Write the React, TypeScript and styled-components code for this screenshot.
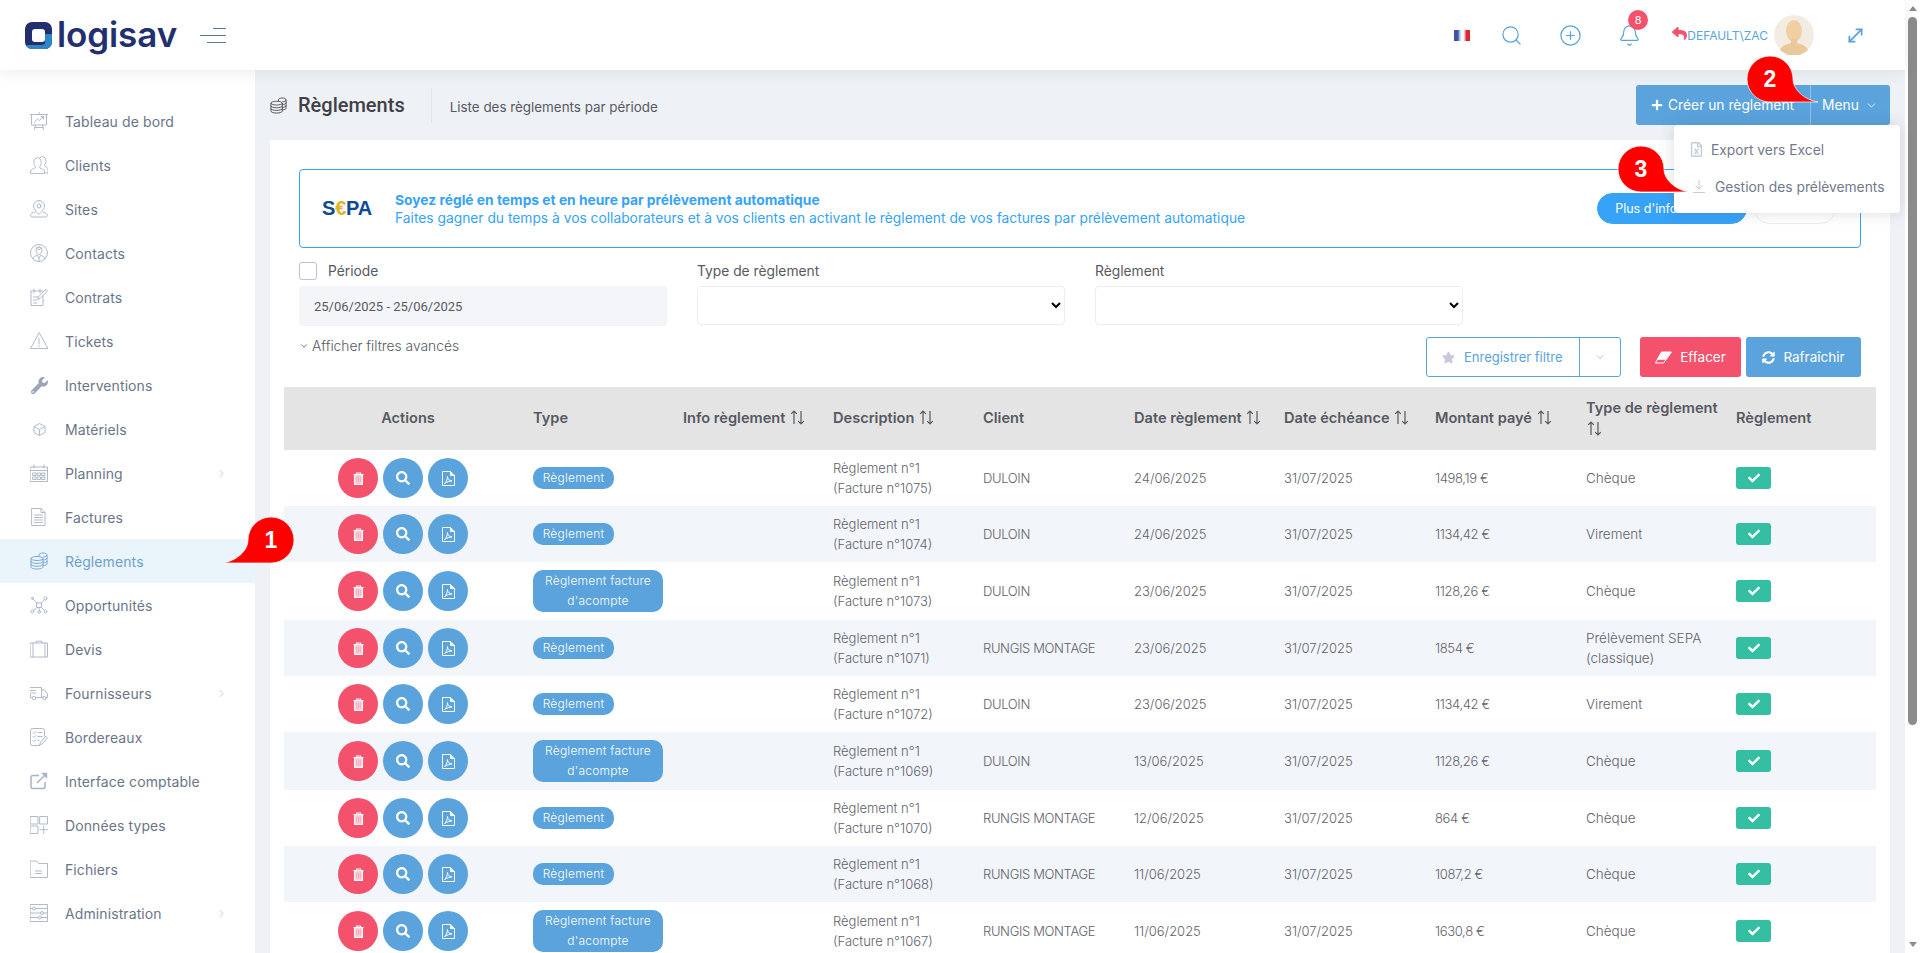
import React from "react"
import styled, { createGlobalStyle } from "styled-components"
import { Bell, ChevronDown, ChevronRight, CirclePlus, MoveDiagonal, Search } from "lucide-react"
import { FaCheck, FaPlus, FaRegFileExcel, FaReply, FaSearch, FaStar, FaSyncAlt, FaWrench } from "react-icons/fa"

const UI_FONT = `Inter, "Noto Sans", sans-serif`

const GlobalStyle = createGlobalStyle`
  html, body {
    margin: 0;
    padding: 0;
    height: 100%;
    overflow: hidden;
    background: #eef1f5;
    font-family: ${UI_FONT};
  }
  * { box-sizing: border-box; }
`

const Screen = styled.div`
  position: relative;
  display: flex;
  width: 100%;
  height: 100vh;
  overflow: hidden;
`

const Page = styled.div`
  flex: 1;
  min-width: 0;
  display: flex;
  flex-direction: column;
`

const Topbar = styled.header`
  position: relative;
  z-index: 3;
  flex: 0 0 70px;
  display: flex;
  align-items: center;
  background: #fff;
  padding: 0 39px 0 25px;
  box-shadow: 0 2px 14px rgba(69, 65, 78, 0.1);
`

const Logo = styled.div`
  display: flex;
  align-items: center;
  gap: 5px;
`

const LogoText = styled.span`
  font-size: 35px;
  font-weight: 600;
  letter-spacing: -0.1px;
  line-height: 1;
  color: #242f6f;
  margin-top: -2px;
`

const Burger = styled.button`
  display: flex;
  flex-direction: column;
  align-items: flex-end;
  gap: 6px;
  width: 26px;
  margin-left: 23px;
  padding: 0;
  border: 0;
  background: none;
`

const BurgerLine = styled.span<{ $w: number }>`
  display: block;
  height: 1px;
  width: ${(p) => p.$w}px;
  background: #5d7c94;
`

const TopRight = styled.div`
  margin-left: auto;
  display: flex;
  align-items: center;
  color: #5aa3dc;
`

const TopItem = styled.div<{ $gap: number }>`
  position: relative;
  display: flex;
  align-items: center;
  margin-left: ${(p) => p.$gap}px;
`

const Flag = styled.span`
  display: block;
  width: 16px;
  height: 11px;
  background: linear-gradient(90deg, #3d55a5 0 25%, #9fb0da 33%, #f4f5fa 45% 60%, #f2a8a8 68%, #e0262e 78% 100%);
`

const BellBadge = styled.span`
  position: absolute;
  top: -14px;
  left: 10px;
  width: 20px;
  height: 20px;
  border-radius: 50%;
  background: #f4516c;
  color: #fff;
  font-size: 11px;
  display: flex;
  align-items: center;
  justify-content: center;
`

const BackIcon = styled(FaReply)`
  color: #f4516c;
  font-size: 15px;
  margin-top: -4px;
`

const UserName = styled.span`
  font-size: 12px;
  color: #5aa3dc;
`

const Body = styled.div`
  flex: 1;
  min-height: 0;
  display: flex;
`

const Sidebar = styled.nav`
  flex: 0 0 255px;
  background: #fff;
  padding-top: 29px;
`

const NavItem = styled.a<{ $active?: boolean }>`
  display: flex;
  align-items: center;
  height: 44px;
  padding: 0 27px 0 30px;
  gap: 17px;
  font-size: 14px;
  color: ${(p) => (p.$active ? "#6f9fd0" : "#6b7589")};
  background: ${(p) => (p.$active ? "#e9f4fb" : "transparent")};
  letter-spacing: 0.1px;
`

const NavIconBox = styled.span<{ $active?: boolean }>`
  flex: 0 0 18px;
  display: flex;
  align-items: center;
  justify-content: center;
  color: ${(p) => (p.$active ? "#6f9fd0" : "#a8b3c5")};
`

const NavArrow = styled(ChevronRight)`
  margin-left: auto;
  color: #a8b3c5;
`

const Content = styled.main`
  flex: 1;
  min-width: 0;
  padding: 0 15px;
`

const SubHeader = styled.div`
  height: 70px;
  display: flex;
  align-items: center;
`

const PageTitle = styled.h1`
  display: flex;
  align-items: center;
  gap: 11px;
  margin: 0;
  padding-right: 26px;
  height: 35px;
  border-right: 1px solid #e2e5ec;
  font-family: Roboto, sans-serif;
  font-size: 20px;
  font-weight: 500;
  color: #3f4047;
`

const PageHint = styled.span`
  margin-left: 18px;
  font-size: 13.4px;
  color: #575962;
  padding-top: 3px;
`

const ActionGroup = styled.div`
  position: relative;
  margin-left: auto;
  display: flex;
  align-items: center;
  height: 40px;
  width: 254px;
  background: #5aa3dc;
  border-radius: 3px;
  color: #fff;
  font-size: 13.8px;
`

const CreateAction = styled.span`
  flex: 0 0 175px;
  display: flex;
  align-items: center;
  gap: 5px;
  height: 100%;
  padding-left: 15px;
  border-right: 1px solid #8fc0e6;
`

const MenuAction = styled.span`
  display: flex;
  align-items: center;
  gap: 6px;
  padding-left: 11px;
`

const Dropdown = styled.div`
  position: absolute;
  z-index: 2;
  top: 40px;
  right: -10px;
  width: 226px;
  height: 88px;
  padding-top: 6px;
  background: #fff;
  border-radius: 4px;
  box-shadow: 0 0 15px rgba(69, 65, 78, 0.18);
`

const DropdownItem = styled.div<{ $indent: number; $gap: number }>`
  display: flex;
  align-items: center;
  height: 37px;
  gap: ${(p) => p.$gap}px;
  padding-left: ${(p) => p.$indent}px;
  font-size: 13.8px;
  color: #74788d;
  svg {
    color: #c4cdd8;
  }
`

const Card = styled.section`
  background: #fff;
  padding: 29px 29px 0;
  height: 813px;
`

const Banner = styled.div`
  display: flex;
  align-items: center;
  height: 79px;
  border: 1px solid #36a3f7;
  border-radius: 4px;
  padding: 0 22px;
  color: #36a3f7;
`

const SepaLogo = styled.span`
  flex: 0 0 73px;
  font-family: "Liberation Sans", sans-serif;
  font-size: 20px;
  font-weight: 700;
  letter-spacing: -0.2px;
  color: #0c4a96;
`

const SepaEuro = styled.span`
  color: #e2b323;
`

const BannerText = styled.div`
  flex: 1;
  font-size: 13.8px;
  line-height: 18px;
`

const BannerTitle = styled.div`
  font-weight: 700;
`

const BannerButton = styled.span<{ $filled?: boolean }>`
  display: flex;
  align-items: center;
  justify-content: center;
  flex: 0 0 ${(p) => (p.$filled ? 150 : 82)}px;
  margin-right: ${(p) => (p.$filled ? 7 : 2)}px;
  height: 31px;
  border-radius: 16px;
  font-size: 12.5px;
  color: #fff;
  background: ${(p) => (p.$filled ? "#36a3f7" : "#fff")};
  border: 1px solid ${(p) => (p.$filled ? "#36a3f7" : "#ebedf2")};
`

const Filters = styled.div`
  display: grid;
  grid-template-columns: repeat(3, 368px);
  column-gap: 30px;
  margin-top: 14px;
`

const FieldLabel = styled.label`
  display: flex;
  align-items: center;
  gap: 11px;
  height: 18px;
  margin-bottom: 6px;
  font-size: 13.8px;
  color: #575962;
`

const CheckBox = styled.span`
  display: block;
  width: 18px;
  height: 18px;
  border: 1px solid #bdc3d4;
  border-radius: 3px;
`

const DateInput = styled.div`
  display: flex;
  align-items: center;
  height: 40px;
  padding-left: 15px;
  background: #f4f5f8;
  border-radius: 3px;
  font-family: Roboto, sans-serif;
  font-size: 13px;
  color: #575962;
`

const Select = styled.select`
  display: block;
  width: 100%;
  height: 39px;
  margin-top: 1px;
  background: #fff;
  border: 1px solid #ebedf2;
  border-radius: 4px;
`

const ToolRow = styled.div`
  display: flex;
  justify-content: space-between;
  margin: 11px 0 10px;
`

const AdvancedToggle = styled.span`
  display: flex;
  align-items: center;
  gap: 3px;
  height: 18px;
  font-size: 13.8px;
  font-weight: 300;
  color: #575962;
`

const ToolButtons = styled.div`
  display: flex;
`

const SaveFilter = styled.div`
  display: flex;
  width: 195px;
  height: 40px;
  margin-right: 19px;
  border: 1px solid #5aa3dc;
  border-radius: 3px;
  font-size: 13px;
  color: #5aa3dc;
`

const SaveMain = styled.span`
  flex: 1;
  display: flex;
  align-items: center;
  gap: 9px;
  padding-left: 15px;
  border-right: 1px solid #5aa3dc;
  svg {
    color: #c9c8dc;
  }
`

const SaveToggle = styled.span`
  flex: 0 0 40px;
  display: flex;
  align-items: center;
  justify-content: center;
`

const ToolButton = styled.span<{ $danger?: boolean; $w: number }>`
  display: flex;
  align-items: center;
  justify-content: center;
  gap: 8px;
  width: ${(p) => p.$w}px;
  height: 40px;
  margin-left: ${(p) => (p.$danger ? 0 : 5)}px;
  border-radius: 3px;
  font-size: 13.5px;
  color: #fff;
  background: ${(p) => (p.$danger ? "#f4516c" : "#5aa3dc")};
`

const Table = styled.table`
  width: 1592px;
  margin-left: -15px;
  border-collapse: collapse;
  table-layout: fixed;
`

const HeadRow = styled.tr`
  height: 63px;
  background: #e4e4e4;
`

const Th = styled.th<{ $center?: boolean; $w: number }>`
  width: ${(p) => p.$w}px;
  padding: 0 0 0 15px;
  font-size: 14.6px;
  font-weight: 600;
  line-height: 21px;
  text-align: ${(p) => (p.$center ? "center" : "left")};
  color: #575962;
  ${(p) => p.$center && "padding-left: 29px; padding-right: 15px;"}
`

const SortIcon = styled.svg`
  width: 16px;
  height: 15px;
  vertical-align: -2px;
  margin-left: 1px;
`

const Row = styled.tr<{ $striped: boolean }>`
  background: ${(p) => (p.$striped ? "#f2f5fa" : "#fff")};
`

const Td = styled.td`
  padding: 8px 15px;
  font-size: 13px;
  font-weight: 300;
  line-height: 20px;
  color: #5f626c;
`

const TightTd = styled(Td)`
  letter-spacing: -0.35px;
`

const ModeTd = styled(Td)`
  font-size: 13.5px;
`

const RoundButtons = styled.div`
  display: flex;
  gap: 5px;
  padding-left: 39px;
`

const RoundButton = styled.span<{ $danger?: boolean }>`
  display: flex;
  align-items: center;
  justify-content: center;
  width: 40px;
  height: 40px;
  border-radius: 50%;
  color: #fff;
  background: ${(p) => (p.$danger ? "#f4516c" : "#5aa3dc")};
`

const TypeBadge = styled.span<{ $wide: boolean }>`
  display: block;
  width: ${(p) => (p.$wide ? 130 : 81)}px;
  padding: 1px 0;
  border-radius: 10px;
  background: #5aa3dc;
  color: #fff;
  font-size: 12px;
  letter-spacing: 0.25px;
  line-height: 20px;
  text-align: center;
`

const CheckBadge = styled.span`
  display: flex;
  align-items: center;
  justify-content: center;
  width: 35px;
  height: 22px;
  border-radius: 3px;
  background: #34bfa3;
  color: #fff;
`

const ScrollTrack = styled.aside`
  flex: 0 0 15px;
  display: flex;
  flex-direction: column;
  align-items: center;
  background: #fff;
`

const ScrollArrow = styled.span<{ $up?: boolean }>`
  flex: 0 0 17px;
  display: flex;
  align-items: center;
  justify-content: center;
  &::before {
    content: "";
    border-left: 4.5px solid transparent;
    border-right: 4.5px solid transparent;
    ${(p) => (p.$up ? "border-bottom: 5px solid #8c8c8c;" : "border-top: 5px solid #8c8c8c;")}
  }
`

const ScrollThumb = styled.span`
  flex: 0 0 708px;
  width: 9px;
  border-radius: 5px;
  background: #8c8c8c;
`

const ScrollRest = styled.span`
  flex: 1;
`

const Callout = styled.div<{ $x: number; $y: number; $flip?: boolean }>`
  position: absolute;
  z-index: 5;
  left: ${(p) => p.$x}px;
  top: ${(p) => p.$y}px;
  width: 71px;
  height: 46px;
  svg {
    display: block;
    overflow: visible;
    ${(p) => p.$flip && "transform: scaleX(-1);"}
  }
`

const CalloutDigit = styled.span<{ $flip?: boolean }>`
  position: absolute;
  top: 0;
  ${(p) => (p.$flip ? "right: 0;" : "left: 0;")}
  width: 46px;
  height: 46px;
  display: flex;
  align-items: center;
  justify-content: center;
  font-family: "Liberation Sans", sans-serif;
  font-size: 23px;
  font-weight: 700;
  color: #fff;
`

const Ico = ({ children }: { children: React.ReactNode }) => (
  <svg width="18" height="18" viewBox="0 0 18 18" fill="none" stroke="currentColor" strokeWidth="0.9" strokeLinecap="round" strokeLinejoin="round">
    {children}
  </svg>
)

const CoinsIcon = ({ size = 18 }: { size?: number }) => (
  <svg width={size} height={size} viewBox="0 0 18 18" fill="none" stroke="currentColor" strokeWidth="0.9">
    <ellipse cx="7" cy="6.5" rx="6" ry="2" />
    <path d="M1 6.5V15c0 1.1 2.7 2 6 2s6-.9 6-2V6.5M1 9.4c0 1.1 2.7 2 6 2s6-.9 6-2M1 12.2c0 1.1 2.7 2 6 2s6-.9 6-2" />
    <path d="M9 4.4V3c0-1.1 1.8-2 4-2s4 .9 4 2v9c0 .8-1.7 1.6-4 1.7M13 5c2.2 0 4-.9 4-2M13 8c2.2 0 4-.9 4-2M13 11c2.2 0 4-.9 4-2" />
  </svg>
)

const TrashIcon = () => (
  <svg width="11" height="13" viewBox="0 0 11 13" fill="none" stroke="#fff">
    <path d="M.5 2.5h10M3.5 2.5V1h4v1.5" strokeWidth="1.1" />
    <path d="M1.5 2.5h8V12a.5.5 0 0 1-.5.5H2a.5.5 0 0 1-.5-.5z" strokeWidth="1.1" fill="#fbd3d9" />
    <path d="M3.7 4.5v6M5.5 4.5v6M7.3 4.5v6" stroke="#f4a0b0" strokeWidth="0.8" />
  </svg>
)

const PdfIcon = () => (
  <svg width="13" height="15" viewBox="0 0 13 15" fill="none" stroke="#fff" strokeWidth="1">
    <path d="M.5.5h8l4 4v10H.5z" />
    <path d="M8.5.5v4h4" fill="#fff" />
    <path d="M2.5 12.5c1.5-1 3-4 3-7 0 2.5 1.5 4 4.5 4.5-2.5 0-5 1-7.500 2.500z" />
  </svg>
)

const EraserIcon = () => (
  <svg width="17" height="13" viewBox="0 0 17 13" fill="none" stroke="#fff" strokeWidth="1">
    <path d="M6.500 1h10l-5 7H2.500z" fill="#fff" />
    <path d="M2.500 8h9l-3 4h-8z" />
  </svg>
)

type NavEntry = { label: string; icon: React.ReactNode; arrow?: boolean; active?: boolean }

const navEntries: NavEntry[] = [
  {
    label: "Tableau de bord",
    icon: (
      <Ico>
        <path d="M.5 2.5h17M1.5 2.5V13h15V2.500M4 10.500L7.500 7l2 1.500 4-4M11 4.500h2.500V7M5.500 13l-1 4.500M12.500 13l1 4.500M4.800 15.500h8.400M9 .5v2" />
      </Ico>
    ),
  },
  {
    label: "Clients",
    icon: (
      <Ico>
        <path d="M.5 17v-2c0-1.500 3.500-2.200 4.500-3 .6-.6.3-1.400-.2-2.100-.7-.9-1-2.100-1-3.400 0-3 1.600-4.700 3.700-4.700s3.700 1.700 3.700 4.700c0 1.300-.3 2.500-1 3.400-.5.7-.8 1.500-.2 2.100 1 .8 4.500 1.500 4.500 3v2z" />
        <path d="M10.300 1.600c.6-.6 1.300-1 2.200-1 2 0 3.500 1.700 3.500 4.500 0 1.300-.3 2.400-.9 3.300-.5.7-.7 1.400-.2 2 .8.7 3.100 1.200 3.100 2.600V17h-3" />
      </Ico>
    ),
  },
  {
    label: "Sites",
    icon: (
      <Ico>
        <path d="M9 .5A5.500 5.500 0 0 0 3.500 6C3.500 9.500 9 14.500 9 14.500S14.500 9.500 14.500 6A5.500 5.500 0 0 0 9 .5z" />
        <circle cx="9" cy="6" r="2" />
        <path d="M5 12c-2.500.6-4.500 2-4.500 3.300 0 1 .8 1.700 2 1.700h13c1.200 0 2-.7 2-1.700 0-1.300-2-2.700-4.500-3.300" />
      </Ico>
    ),
  },
  {
    label: "Contacts",
    icon: (
      <Ico>
        <circle cx="9" cy="9" r="8.5" />
        <path d="M9 3C7 3 6 4.500 6 6.300s1.500 4.200 3 4.200 3-2.400 3-4.200S11 3 9 3zM2.800 14.500c.4-2 3.200-2.500 4.200-3.500l2 3 2-3c1 1 3.800 1.500 4.200 3.500M9 14v3.500M6 3.500L9 6l3-2.500" />
      </Ico>
    ),
  },
  {
    label: "Contrats",
    icon: (
      <Ico>
        <path d="M13 8v9.500H1V3h12M4 1v4M10 1v4M3.500 9h5M3.500 12h3M3.500 15h3" />
        <path d="M16 1.500L17.500 3 10 10.500l-2.500 1 1-2.500z" />
      </Ico>
    ),
  },
  {
    label: "Tickets",
    icon: (
      <Ico>
        <path d="M9 1L.5 16.500h17zM9 6.500V12M9 13.500v1" />
      </Ico>
    ),
  },
  { label: "Interventions", icon: <FaWrench size={17} color="#9aa5b5" /> },
  {
    label: "Matériels",
    icon: (
      <svg width="13" height="13" viewBox="0 0 13 13" fill="none" stroke="currentColor" strokeWidth="0.9" strokeLinejoin="round">
        <path d="M6.500.5l5.500 3v6l-5.500 3-5.500-3v-6zM1 3.500l5.500 3 5.500-3M6.500 6.500v6" />
      </svg>
    ),
  },
  {
    label: "Planning",
    arrow: true,
    icon: (
      <Ico>
        <path d="M.5 3h17v14.500H.5zM.5 6.500h17M4 1v3M14 1v3M3 9h3v2.500H3zM7.500 9h3v2.500h-3zM12 9h3v2.500h-3zM3 13h3v2.500H3zM7.500 13h3v2.500h-3zM12 13h3v2.500h-3z" />
      </Ico>
    ),
  },
  {
    label: "Factures",
    icon: (
      <Ico>
        <path d="M2 .5h9l4 4v13H2zM11 .5v4h4M4.500 7h8M4.500 9.500h8M4.500 12h8M4.500 14.500h8" />
      </Ico>
    ),
  },
  { label: "Règlements", active: true, icon: <CoinsIcon /> },
  {
    label: "Opportunités",
    icon: (
      <Ico>
        <path d="M7 7h4.500v4.500H7zM7 7L3 3M11.500 7l3-3.500M7 11.500l-3.500 3M11.500 11.500l3 3M9.200 11.500v3" />
        <circle cx="2.3" cy="2.3" r="1" />
        <circle cx="15.3" cy="2.5" r="1.5" />
        <circle cx="2.3" cy="15.5" r="1.5" />
        <circle cx="15.5" cy="15.5" r="1.3" />
        <circle cx="9.2" cy="16" r="1.3" />
      </Ico>
    ),
  },
  {
    label: "Devis",
    icon: (
      <Ico>
        <path d="M.5 3h17v14H.5zM3 3v14M15 3v14M6 3V1.200h6V3" />
      </Ico>
    ),
  },
  {
    label: "Fournisseurs",
    arrow: true,
    icon: (
      <Ico>
        <path d="M.5 3.500h11v10h-5M2 13.500H.5v-3M.5 6.500h5M.5 9h5M11.500 6h3l3 4v3.500H16M11.500 13.500H13" />
        <circle cx="4" cy="14" r="1.7" />
        <circle cx="14.3" cy="14" r="1.7" />
      </Ico>
    ),
  },
  {
    label: "Bordereaux",
    icon: (
      <Ico>
        <path d="M14.500 8V2.500a2 2 0 0 0-2-2h-10a2 2 0 0 0-2 2v13a2 2 0 0 0 2 2h7" />
        <path d="M3 4.500l1 1 2-2M8 4.500h4M3 8.500l1 1 2-2M8 8.500h4M3 12.500l1 1 2-2M8 12.500h1" />
        <path d="M16 8.500l1.500 1.500-5.500 6-2.500 1 1-2.500z" />
      </Ico>
    ),
  },
  {
    label: "Interface comptable",
    icon: (
      <svg width="18" height="18" viewBox="0 0 18 18" fill="none" stroke="currentColor" strokeWidth="1.5" strokeLinejoin="round">
        <path d="M15 10v4.500a2 2 0 0 1-2 2H3a2 2 0 0 1-2-2v-9a2 2 0 0 1 2-2h6M7 11l8.500-8.500" />
        <path d="M11 .8h6.200V7z" fill="currentColor" stroke="none" />
      </svg>
    ),
  },
  {
    label: "Données types",
    icon: (
      <Ico>
        <path d="M.5.5H8V8H.5zM10 .5h7.500V8H10zM.5 10H8v7.500H.5zM13.700 10v7.500M10 13.700h7.500" />
      </Ico>
    ),
  },
  {
    label: "Fichiers",
    icon: (
      <Ico>
        <path d="M.5 1h6l2 2.500h9v14H.5zM5.500 11h6M5.500 13.500h6" />
      </Ico>
    ),
  },
  {
    label: "Administration",
    arrow: true,
    icon: (
      <Ico>
        <path d="M.5.5h17v17H.5zM.5 4.500h2M5.500 4.500h12M.5 9h10M13.500 9h4M.5 13.500h8M11.500 13.500h6" />
        <circle cx="4" cy="4.5" r="1.5" />
        <circle cx="12" cy="9" r="1.5" />
        <circle cx="10" cy="13.5" r="1.5" />
      </Ico>
    ),
  },
]

type Reglement = {
  wide: boolean
  facture: number
  client: string
  date: string
  montant: string
  mode: string
}

const reglements: Reglement[] = [
  { wide: false, facture: 1075, client: "DULOIN", date: "24/06/2025", montant: "1498,19 €", mode: "Chèque" },
  { wide: false, facture: 1074, client: "DULOIN", date: "24/06/2025", montant: "1134,42 €", mode: "Virement" },
  { wide: true, facture: 1073, client: "DULOIN", date: "23/06/2025", montant: "1128,26 €", mode: "Chèque" },
  { wide: false, facture: 1071, client: "RUNGIS MONTAGE", date: "23/06/2025", montant: "1854 €", mode: "Prélèvement SEPA (classique)" },
  { wide: false, facture: 1072, client: "DULOIN", date: "23/06/2025", montant: "1134,42 €", mode: "Virement" },
  { wide: true, facture: 1069, client: "DULOIN", date: "13/06/2025", montant: "1128,26 €", mode: "Chèque" },
  { wide: false, facture: 1070, client: "RUNGIS MONTAGE", date: "12/06/2025", montant: "864 €", mode: "Chèque" },
  { wide: false, facture: 1068, client: "RUNGIS MONTAGE", date: "11/06/2025", montant: "1087,2 €", mode: "Chèque" },
  { wide: true, facture: 1067, client: "RUNGIS MONTAGE", date: "11/06/2025", montant: "1630,8 €", mode: "Chèque" },
]

const Sort = () => (
  <SortIcon viewBox="0 0 16 15" fill="none" stroke="currentColor" strokeWidth="1.2">
    <path d="M4 14V1M1.200 3.800L4 1l2.800 2.800M11 1v13M8.200 11.200L11 14l2.800-2.800" />
  </SortIcon>
)

const Marker = ({ n, x, y, flip }: { n: number; x: number; y: number; flip?: boolean }) => (
  <Callout $x={x} $y={y} $flip={flip}>
    <svg width="71" height="46" viewBox="0 0 71 46">
      <path d="M23 0A23 23 0 0 0 23 46H71C58 44 46 34 46 23A23 23 0 0 0 23 0Z" fill="#ff0000" stroke="#fff" strokeWidth="0.7" />
    </svg>
    <CalloutDigit $flip={flip}>{n}</CalloutDigit>
  </Callout>
)

const LogoMark = () => (
  <svg width="27" height="27" viewBox="0 0 27 27">
    <path fillRule="evenodd" d="M7 0h13a7 7 0 0 1 7 7v13a7 7 0 0 1-7 7H7a7 7 0 0 1-7-7V7a7 7 0 0 1 7-7zM10 7a3 3 0 0 0-3 3v7a3 3 0 0 0 3 3h7a3 3 0 0 0 3-3v-7a3 3 0 0 0-3-3z" fill="#232e6e" />
    <path d="M20 12h7v8a7 7 0 0 1-7 7H7a7 7 0 0 1-6-4h16a3 3 0 0 0 3-3z" fill="#2e86c7" />
  </svg>
)

const Avatar = () => (
  <svg width="40" height="40" viewBox="0 0 40 40">
    <circle cx="20" cy="20" r="20" fill="#f3ece3" />
    <ellipse cx="20" cy="16" rx="8" ry="11" fill="#f2cfa2" />
    <path d="M6 35c2-5 8-6 11-7v-4h6v4c3 1 9 2 11 7a20 20 0 0 1-28 0z" fill="#ebc79c" />
  </svg>
)

const columns = [
  { label: "Actions", w: 234, center: true },
  { label: "Type", w: 150 },
  { label: "Info règlement", w: 150, sort: true },
  { label: "Description", w: 150, sort: true },
  { label: "Client", w: 151 },
  { label: "Date règlement", w: 150, sort: true },
  { label: "Date échéance", w: 151, sort: true },
  { label: "Montant payé", w: 151, sort: true },
  { label: "Type de règlement", w: 150, sort: true },
  { label: "Règlement", w: 155 },
]

export default function App() {
  return (
    <Screen>
      <GlobalStyle />
      <Page>
        <Topbar>
          <Logo>
            <LogoMark />
            <LogoText>logisav</LogoText>
          </Logo>
          <Burger>
            <BurgerLine $w={13} />
            <BurgerLine $w={26} />
            <BurgerLine $w={19} />
          </Burger>
          <TopRight>
            <TopItem $gap={0}>
              <Flag />
            </TopItem>
            <TopItem $gap={30}>
              <Search size={23} strokeWidth={1.3} />
            </TopItem>
            <TopItem $gap={36}>
              <CirclePlus size={23} strokeWidth={1.3} />
            </TopItem>
            <TopItem $gap={36}>
              <Bell size={23} strokeWidth={1.3} />
              <BellBadge>8</BellBadge>
            </TopItem>
            <TopItem $gap={31}>
              <BackIcon />
              <UserName>DEFAULT\ZAC</UserName>
            </TopItem>
            <TopItem $gap={6}>
              <Avatar />
            </TopItem>
            <TopItem $gap={31}>
              <MoveDiagonal size={21} strokeWidth={2} />
            </TopItem>
          </TopRight>
        </Topbar>
        <Body>
          <Sidebar>
            {navEntries.map((entry) => (
              <NavItem key={entry.label} $active={entry.active}>
                <NavIconBox $active={entry.active}>{entry.icon}</NavIconBox>
                {entry.label}
                {entry.arrow && <NavArrow size={13} strokeWidth={1.2} />}
              </NavItem>
            ))}
          </Sidebar>
          <Content>
            <SubHeader>
              <PageTitle>
                <CoinsIcon size={17} />
                Règlements
              </PageTitle>
              <PageHint>Liste des règlements par période</PageHint>
              <ActionGroup>
                <CreateAction>
                  <FaPlus size={12} />
                  Créer un règlement
                </CreateAction>
                <MenuAction>
                  Menu
                  <ChevronDown size={13} strokeWidth={1.5} />
                </MenuAction>
                <Dropdown>
                  <DropdownItem $indent={15} $gap={7}>
                    <FaRegFileExcel size={15} />
                    Export vers Excel
                  </DropdownItem>
                  <DropdownItem $indent={19} $gap={10}>
                    <svg width="12" height="13" viewBox="0 0 12 13" fill="none" stroke="currentColor" strokeWidth="1">
                      <path d="M6 0v9M2.500 5.500L6 9l3.500-3.500M0 12.500h12" />
                    </svg>
                    Gestion des prélèvements
                  </DropdownItem>
                </Dropdown>
              </ActionGroup>
            </SubHeader>
            <Card>
              <Banner>
                <SepaLogo>
                  S<SepaEuro>€</SepaEuro>PA
                </SepaLogo>
                <BannerText>
                  <BannerTitle>Soyez réglé en temps et en heure par prélèvement automatique</BannerTitle>
                  Faites gagner du temps à vos collaborateurs et à vos clients en activant le règlement de vos factures par prélèvement automatique
                </BannerText>
                <BannerButton $filled>Plus d'informations</BannerButton>
                <BannerButton />
              </Banner>
              <Filters>
                <div>
                  <FieldLabel>
                    <CheckBox />
                    Période
                  </FieldLabel>
                  <DateInput>25/06/2025 - 25/06/2025</DateInput>
                </div>
                <div>
                  <FieldLabel>Type de règlement</FieldLabel>
                  <Select />
                </div>
                <div>
                  <FieldLabel>Règlement</FieldLabel>
                  <Select />
                </div>
              </Filters>
              <ToolRow>
                <AdvancedToggle>
                  <ChevronDown size={10} strokeWidth={2} />
                  Afficher filtres avancés
                </AdvancedToggle>
                <ToolButtons>
                  <SaveFilter>
                    <SaveMain>
                      <FaStar size={13} />
                      Enregistrer filtre
                    </SaveMain>
                    <SaveToggle>
                      <ChevronDown size={12} strokeWidth={1.2} />
                    </SaveToggle>
                  </SaveFilter>
                  <ToolButton $danger $w={101}>
                    <EraserIcon />
                    Effacer
                  </ToolButton>
                  <ToolButton $w={115}>
                    <FaSyncAlt size={13} />
                    Rafraîchir
                  </ToolButton>
                </ToolButtons>
              </ToolRow>
              <Table>
                <thead>
                  <HeadRow>
                    {columns.map((col) => (
                      <Th key={col.label} $w={col.w} $center={col.center}>
                        {col.label} {col.sort && <Sort />}
                      </Th>
                    ))}
                  </HeadRow>
                </thead>
                <tbody>
                  {reglements.map((r, i) => (
                    <Row key={r.facture} $striped={i % 2 === 1}>
                      <Td>
                        <RoundButtons>
                          <RoundButton $danger>
                            <TrashIcon />
                          </RoundButton>
                          <RoundButton>
                            <FaSearch size={14} />
                          </RoundButton>
                          <RoundButton>
                            <PdfIcon />
                          </RoundButton>
                        </RoundButtons>
                      </Td>
                      <Td>
                        <TypeBadge $wide={r.wide}>{r.wide ? "Règlement facture d'acompte" : "Règlement"}</TypeBadge>
                      </Td>
                      <Td />
                      <Td>
                        Règlement n°1
                        <br />
                        (Facture n°{r.facture})
                      </Td>
                      <TightTd>{r.client}</TightTd>
                      <Td>{r.date}</Td>
                      <Td>31/07/2025</Td>
                      <TightTd>{r.montant}</TightTd>
                      <ModeTd>{r.mode}</ModeTd>
                      <Td>
                        <CheckBadge>
                          <FaCheck size={12} />
                        </CheckBadge>
                      </Td>
                    </Row>
                  ))}
                </tbody>
              </Table>
            </Card>
          </Content>
        </Body>
      </Page>
      <ScrollTrack>
        <ScrollArrow $up />
        <ScrollThumb />
        <ScrollRest />
        <ScrollArrow />
      </ScrollTrack>
      <Marker n={1} x={223} y={517} flip />
      <Marker n={2} x={1747} y={56} />
      <Marker n={3} x={1618} y={146} />
    </Screen>
  )
}
